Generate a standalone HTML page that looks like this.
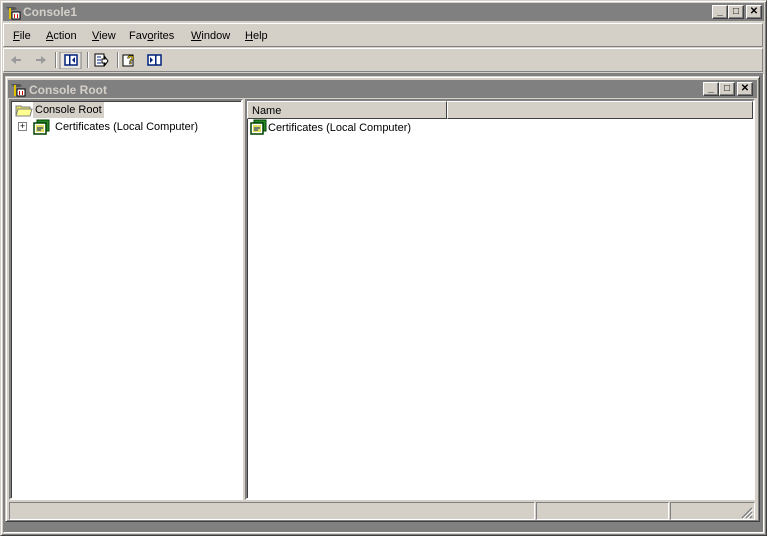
<!DOCTYPE html>
<html><head><style>
*{margin:0;padding:0;box-sizing:border-box}
body{width:767px;height:536px;background:#d4d0c8;font-family:"Liberation Sans",Tahoma,sans-serif;font-size:11px;position:relative;overflow:hidden}
.a{position:absolute}
.title{background:#808080;color:#d4d0c8;font-weight:bold;font-size:12px}
.btn{position:absolute;width:16px;height:14px;background:#d4d0c8;border:1px solid;border-color:#fff #404040 #404040 #fff;box-shadow:inset -1px -1px #808080;font-size:10px;text-align:center;line-height:12px;color:#000;font-weight:bold}
.sunk{border:1px solid;border-color:#808080 #fff #fff #808080}
.sunk2{border:2px solid;border-color:#808080 #fff #fff #808080;box-shadow:inset 1px 1px #404040}
u{text-decoration:underline}
</style></head><body>
<div class="a" style="left:0;top:0;width:767px;height:536px;border:1px solid;border-color:#d4d0c8 #404040 #404040 #d4d0c8;box-shadow:inset 1px 1px #fff,inset -1px -1px #808080"></div>
<div class="a title" style="left:3px;top:3px;width:761px;height:18px"></div>
<svg class="a" style="left:5px;top:4px" width="16" height="16"><path d="M1 3h9l2 2-3 1H4z" fill="#555"/><rect x="4" y="4" width="2" height="11" fill="#e0c000"/><rect x="7" y="8" width="8" height="7" fill="#fff" stroke="#000"/><rect x="9" y="10" width="1" height="4" fill="#c00"/><rect x="12" y="10" width="1" height="4" fill="#c00"/></svg>
<div class="a title" style="left:23px;top:5px;background:none">Console1</div>
<div class="btn" style="left:712px;top:5px">_</div>
<div class="btn" style="left:728px;top:5px">□</div>
<div class="btn" style="left:746px;top:5px">✕</div>
<div class="a" style="left:3px;top:23px;width:760px;height:24px;border:1px solid;border-color:#fff #808080 #808080 #fff"></div>
<div class="a" style="top:30px;left:13px;font-size:11px"><u>F</u>ile</div>
<div class="a" style="top:30px;left:46px"><u>A</u>ction</div>
<div class="a" style="top:30px;left:92px"><u>V</u>iew</div>
<div class="a" style="top:30px;left:129px">Fav<u>o</u>rites</div>
<div class="a" style="top:30px;left:191px"><u>W</u>indow</div>
<div class="a" style="top:30px;left:245px"><u>H</u>elp</div>
<div class="a" style="left:3px;top:48px;width:760px;height:24px;border:1px solid;border-color:#fff #808080 #808080 #fff"></div>
<svg class="a" style="left:9px;top:52px" width="160" height="17">
<path d="M2 8l5-4v3h5v2H7v3z" fill="#9a9a9a"/><path d="M37 8l-5-4v3h-5v2h5v3z" fill="#9a9a9a"/>
<rect x="46" y="0" width="1" height="16" fill="#808080"/><rect x="47" y="0" width="1" height="16" fill="#fff"/>
<rect x="51" y="0" width="21" height="17" fill="#e8e6e0" stroke="#808080"/>
<rect x="56" y="3" width="12" height="10" fill="#fff" stroke="#00207a" stroke-width="1.5"/><rect x="60" y="3" width="1.5" height="10" fill="#00207a"/><path d="M66 5v6l-3-3z" fill="#00207a"/>
<rect x="78" y="0" width="1" height="16" fill="#808080"/><rect x="79" y="0" width="1" height="16" fill="#fff"/>
<rect x="86" y="2" width="9" height="12" fill="#fff" stroke="#000"/><path d="M88 5h4M88 8h4M88 11h4" stroke="#00207a"/><path d="M93 7h3v-2l3 4-3 4v-2h-3z" fill="#fff" stroke="#000"/>
<rect x="108" y="0" width="1" height="16" fill="#808080"/><rect x="109" y="0" width="1" height="16" fill="#fff"/>
<rect x="114" y="3" width="10" height="11" fill="#fff" stroke="#000"/><text x="118" y="12" font-size="12" font-weight="bold" fill="#e0c000" stroke="#000" stroke-width=".5">?</text>
<rect x="139" y="3" width="13" height="10" fill="#fff" stroke="#00207a" stroke-width="1.5"/><rect x="146" y="3" width="1.5" height="10" fill="#00207a"/><path d="M141 5v6l3-3z" fill="#00207a"/>
</svg>
<div class="a" style="left:3px;top:73px;width:761px;height:460px;background:#808080;border:1px solid;border-color:#808080 #fff #fff #808080"></div>
<div class="a" style="left:5px;top:76px;width:755px;height:446px;background:#d4d0c8;border:1px solid;border-color:#d4d0c8 #404040 #404040 #d4d0c8;box-shadow:inset 1px 1px #fff,inset -1px -1px #808080"></div>
<div class="a title" style="left:8px;top:80px;width:749px;height:18px"></div>
<svg class="a" style="left:10px;top:81px" width="16" height="16"><path d="M1 3h9l2 2-3 1H4z" fill="#555"/><rect x="4" y="4" width="2" height="11" fill="#e0c000"/><rect x="7" y="8" width="8" height="7" fill="#fff" stroke="#000"/><rect x="9" y="10" width="1" height="4" fill="#c00"/><rect x="12" y="10" width="1" height="4" fill="#c00"/></svg>
<div class="a title" style="left:29px;top:83px;background:none">Console Root</div>
<div class="btn" style="left:703px;top:82px">_</div>
<div class="btn" style="left:719px;top:82px">□</div>
<div class="btn" style="left:737px;top:82px">✕</div>
<div class="a sunk2" style="left:9px;top:99px;width:234px;height:401px;background:#fff"></div>
<svg class="a" style="left:15px;top:103px" width="18" height="15"><path d="M1 3h5l1 1h8v9H1z" fill="#e8e060" stroke="#808080"/><path d="M3 6h14l-2 7H1z" fill="#ffff90" stroke="#808080"/></svg>
<div class="a" style="left:33px;top:102px;width:71px;height:16px;background:#d4d0c8;padding:2px 2px">Console Root</div>
<div class="a" style="left:18px;top:122px;width:9px;height:9px;border:1px solid #808080;background:#fff;font-size:9px;line-height:7px;text-align:center">+</div>
<svg class="a" style="left:33px;top:119px" width="18" height="16"><rect x="4" y="1" width="12" height="11" fill="#2a8a2a" stroke="#004000"/><rect x="1" y="4" width="12" height="11" fill="#fff" stroke="#004000" stroke-width="1.5"/><rect x="3" y="6" width="8" height="7" fill="#e0e060"/><path d="M4 9h6M4 11h4" stroke="#00207a"/></svg>
<div class="a" style="left:55px;top:121px">Certificates (Local Computer)</div>
<div class="a sunk2" style="left:245px;top:99px;width:510px;height:401px;background:#fff"></div>
<div class="a" style="left:247px;top:101px;width:200px;height:18px;background:#d4d0c8;border:1px solid;border-color:#fff #404040 #404040 #fff;padding:3px 4px">Name</div>
<div class="a" style="left:447px;top:101px;width:306px;height:18px;background:#d4d0c8;border:1px solid;border-color:#fff #404040 #404040 #fff"></div>
<svg class="a" style="left:250px;top:119px" width="18" height="16"><rect x="4" y="1" width="12" height="11" fill="#2a8a2a" stroke="#004000"/><rect x="1" y="4" width="12" height="11" fill="#fff" stroke="#004000" stroke-width="1.5"/><rect x="3" y="6" width="8" height="7" fill="#e0e060"/><path d="M4 9h6M4 11h4" stroke="#00207a"/></svg>
<div class="a" style="left:268px;top:122px">Certificates (Local Computer)</div>
<div class="a sunk" style="left:9px;top:502px;width:526px;height:18px"></div>
<div class="a sunk" style="left:536px;top:502px;width:133px;height:18px"></div>
<div class="a sunk" style="left:670px;top:502px;width:85px;height:18px"></div>
<svg class="a" style="left:740px;top:506px" width="14" height="14"><path d="M12 2L2 12M12 6L6 12M12 10L10 12" stroke="#808080" stroke-width="1.5"/><path d="M13 3L3 13M13 7L7 13" stroke="#fff"/></svg>
</body></html>
